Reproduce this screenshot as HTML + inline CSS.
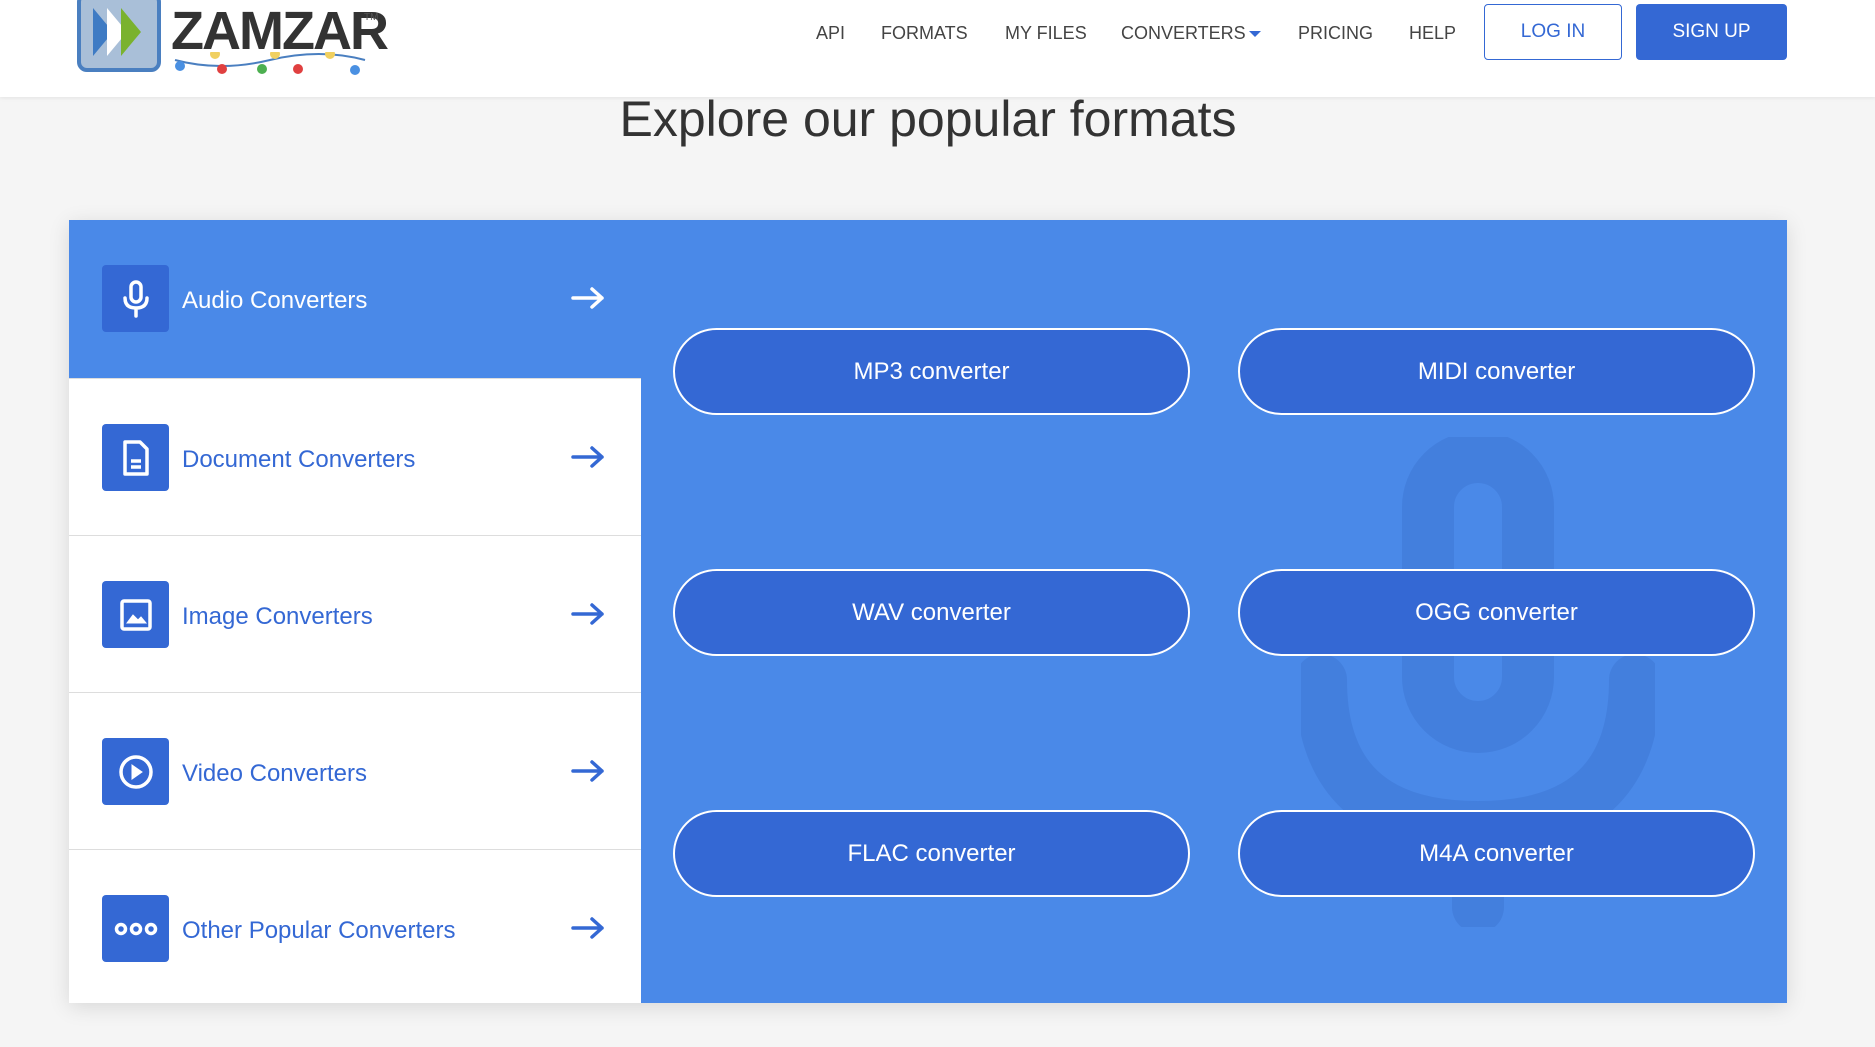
<!DOCTYPE html>
<html><head><meta charset="utf-8"><style>
*{margin:0;padding:0;box-sizing:border-box}
body{width:1875px;height:1047px;overflow:hidden;background:#f5f5f5;font-family:"Liberation Sans",sans-serif;position:relative}
.hdr{position:absolute;left:0;top:0;width:1875px;height:97px;background:#fff;box-shadow:0 1px 4px rgba(0,0,0,.08)}
.nav{position:absolute;top:23px;font-size:18px;color:#444}
.btn{position:absolute;top:4px;height:56px;border-radius:4px;font-size:19px;display:flex;align-items:center;justify-content:center}
h1{position:absolute;left:0;width:1856px;top:90px;text-align:center;font-weight:normal;font-size:50px;color:#333}
.panel{position:absolute;left:69px;top:220px;width:1718px;height:783px;background:#4a89e8;box-shadow:0 4px 20px rgba(0,0,0,.12);overflow:hidden}
.row{position:absolute;left:0;width:572px;height:157px;background:#fff;border-top:1px solid #ddd}
.row.act{background:#4a89e8;border:none}
.ic{position:absolute;left:33px;top:45px;width:67px;height:67px;background:#3468d4;border-radius:4px;display:flex;align-items:center;justify-content:center}
.lb{position:absolute;left:113px;top:67px;font-size:24px;color:#3468d4}
.act .lb{color:#fff}
.ar{position:absolute;left:502px;top:66px}
.cb{position:absolute;width:517px;height:87px;border:2px solid #fff;border-radius:44px;background:#3468d4;color:#fff;font-size:24px;display:flex;align-items:center;justify-content:center}
</style></head><body>
<div class="hdr">
<svg style="position:absolute;left:77px;top:-6px" width="84" height="78" viewBox="0 0 84 78"><rect x="2" y="0" width="80" height="76" rx="8" fill="#a9bfd8" stroke="#4a7fc0" stroke-width="4"/><path d="M16 14 L36 38 L16 62Z" fill="#3e7bc4"/><path d="M30 14 L50 38 L30 62Z" fill="#fff"/><path d="M44 14 L64 38 L44 62Z" fill="#7ab22e"/></svg>
<div style="position:absolute;left:171px;top:0px;font-size:54px;font-weight:bold;color:#333;letter-spacing:-2px">ZAMZAR</div>
<div style="position:absolute;left:364px;top:12px;font-size:10px;color:#555">TM</div>
<svg style="position:absolute;left:170px;top:52px" width="200" height="25"><path d="M5 8 Q50 20 100 8 T195 8" stroke="#4a7fc0" fill="none" stroke-width="2"/><circle cx="10" cy="14" r="5" fill="#4a90e2"/><circle cx="52" cy="17" r="5" fill="#e04040"/><circle cx="92" cy="17" r="5" fill="#4caf50"/><circle cx="128" cy="17" r="5" fill="#e04040"/><circle cx="185" cy="18" r="5" fill="#4a90e2"/><circle cx="45" cy="2" r="5" fill="#f0d060"/><circle cx="105" cy="2" r="5" fill="#f0d060"/><circle cx="160" cy="2" r="5" fill="#f0d060"/></svg>
<div class="nav" style="left:816px">API</div>
<div class="nav" style="left:881px">FORMATS</div>
<div class="nav" style="left:1005px">MY FILES</div>
<div class="nav" style="left:1121px">CONVERTERS</div>
<div style="position:absolute;left:1249px;top:31px;border-left:6px solid transparent;border-right:6px solid transparent;border-top:6px solid #3468d4"></div>
<div class="nav" style="left:1298px">PRICING</div>
<div class="nav" style="left:1409px">HELP</div>
<div class="btn" style="left:1484px;width:138px;border:1px solid #3468d4;color:#3468d4">LOG IN</div>
<div class="btn" style="left:1636px;width:151px;background:#3468d4;color:#fff">SIGN UP</div>
</div>
<h1>Explore our popular formats</h1>
<div class="panel">
<svg style="position:absolute;left:1232px;top:217px" width="354" height="490" viewBox="0 0 354 490" fill="none" stroke="#437fdd" stroke-linecap="round"><rect x="127" y="20" width="100" height="270" rx="50" stroke-width="52"/><path d="M20 243 Q20 390 177 390 Q334 390 334 243" stroke-width="52"/><path d="M177 390 V470" stroke-width="52"/></svg>
<div class="row act" style="top:0"><div class="ic"><svg width="30" height="40" viewBox="0 0 30 40" fill="none" stroke="#fff" stroke-width="3.5" stroke-linecap="round"><rect x="10" y="3" width="10" height="20" rx="5"/><path d="M4 19 Q4 29 15 29 Q26 29 26 19M15 29V37"/></svg></div><div class="lb">Audio Converters</div><svg class="ar" width="34" height="24" viewBox="0 0 34 24" fill="none" stroke="#fff" stroke-width="3.5" stroke-linecap="round" stroke-linejoin="round"><path d="M2 12H31M21 3L31 12L21 21"/></svg></div>
<div class="row" style="top:158px"><div class="ic"><svg width="30" height="38" viewBox="0 0 30 38" fill="none" stroke="#fff" stroke-width="3.5" stroke-linejoin="round"><path d="M4 3H19L26 10V35H4Z"/><path d="M10 22H20M10 28H20"/></svg></div><div class="lb">Document Converters</div><svg class="ar" width="34" height="24" viewBox="0 0 34 24" fill="none" stroke="#3468d4" stroke-width="3.5" stroke-linecap="round" stroke-linejoin="round"><path d="M2 12H31M21 3L31 12L21 21"/></svg></div>
<div class="row" style="top:315px"><div class="ic"><svg width="34" height="34" viewBox="0 0 34 34" fill="none" stroke="#fff" stroke-width="3.5"><rect x="3" y="3" width="28" height="28" rx="2"/><path d="M8 25L14 17L19 22L22 19L27 25Z" fill="#fff" stroke-width="1"/></svg></div><div class="lb">Image Converters</div><svg class="ar" width="34" height="24" viewBox="0 0 34 24" fill="none" stroke="#3468d4" stroke-width="3.5" stroke-linecap="round" stroke-linejoin="round"><path d="M2 12H31M21 3L31 12L21 21"/></svg></div>
<div class="row" style="top:472px"><div class="ic"><svg width="38" height="38" viewBox="0 0 38 38" fill="none" stroke="#fff" stroke-width="3.5"><circle cx="19" cy="19" r="15"/><path d="M15 12L25 19L15 26Z" fill="#fff" stroke-width="1"/></svg></div><div class="lb">Video Converters</div><svg class="ar" width="34" height="24" viewBox="0 0 34 24" fill="none" stroke="#3468d4" stroke-width="3.5" stroke-linecap="round" stroke-linejoin="round"><path d="M2 12H31M21 3L31 12L21 21"/></svg></div>
<div class="row" style="top:629px"><div class="ic"><svg width="44" height="14" viewBox="0 0 44 14" fill="none" stroke="#fff" stroke-width="3.5"><circle cx="7" cy="7" r="4.5"/><circle cx="22" cy="7" r="4.5"/><circle cx="37" cy="7" r="4.5"/></svg></div><div class="lb">Other Popular Converters</div><svg class="ar" width="34" height="24" viewBox="0 0 34 24" fill="none" stroke="#3468d4" stroke-width="3.5" stroke-linecap="round" stroke-linejoin="round"><path d="M2 12H31M21 3L31 12L21 21"/></svg></div>
<div class="cb" style="left:604px;top:108px">MP3 converter</div>
<div class="cb" style="left:1169px;top:108px">MIDI converter</div>
<div class="cb" style="left:604px;top:349px">WAV converter</div>
<div class="cb" style="left:1169px;top:349px">OGG converter</div>
<div class="cb" style="left:604px;top:590px">FLAC converter</div>
<div class="cb" style="left:1169px;top:590px">M4A converter</div>
</div>
</body></html>
